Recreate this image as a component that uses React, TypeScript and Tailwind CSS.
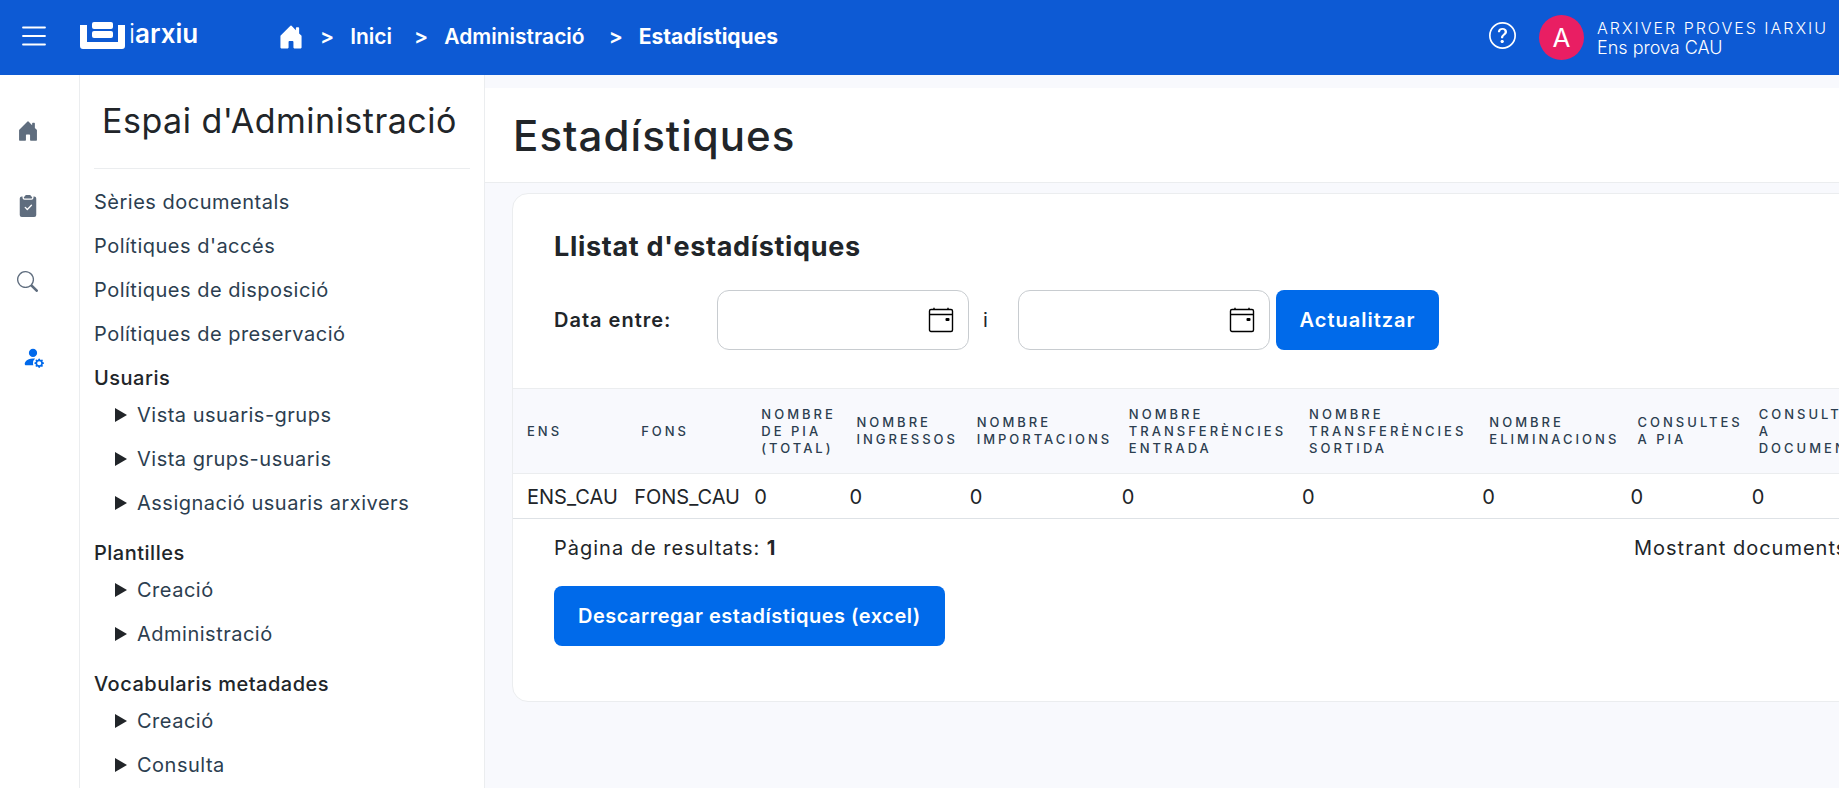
import React, { useState } from 'react';
import {
  BsHouseDoorFill,
  BsClipboard2CheckFill,
  BsSearch,
  BsPersonFillGear,
  BsQuestionCircle,
} from 'react-icons/bs';

interface MenuSection {
  title: string;
  items: string[];
}

interface StatColumn {
  label: string;
  value: string;
  width: string;
}

const LINKS = ['Sèries documentals', "Polítiques d'accés", 'Polítiques de disposició', 'Polítiques de preservació'];

const SECTIONS: MenuSection[] = [
  { title: 'Usuaris', items: ['Vista usuaris-grups', 'Vista grups-usuaris', 'Assignació usuaris arxivers'] },
  { title: 'Plantilles', items: ['Creació', 'Administració'] },
  { title: 'Vocabularis metadades', items: ['Creació', 'Consulta'] },
];

const COLUMNS: StatColumn[] = [
  { label: 'Ens', value: 'ENS_CAU', width: 'w-[114px]' },
  { label: 'Fons', value: 'FONS_CAU', width: 'w-[120px]' },
  { label: 'Nombre de PIA (total)', value: '0', width: 'w-[95px]' },
  { label: 'Nombre ingressos', value: '0', width: 'w-[120px]' },
  { label: 'Nombre importacions', value: '0', width: 'w-[152px]' },
  { label: 'Nombre transferències entrada', value: '0', width: 'w-[180px]' },
  { label: 'Nombre transferències sortida', value: '0', width: 'w-[180px]' },
  { label: 'Nombre eliminacions', value: '0', width: 'w-[148px]' },
  { label: 'Consultes a PIA', value: '0', width: 'w-[121px]' },
  { label: 'Consultes a documents', value: '0', width: 'w-[160px]' },
];

const Logo = () => (
  <a href="#" aria-label="iarxiu" className="flex items-start text-white">
    <svg width="46" height="28" viewBox="0 0 46 28" fill="currentColor">
      <path d="M0 3h7v17h31V3h7v21a3 3 0 0 1-3 3H3a3 3 0 0 1-3-3z" />
      <rect x="12" y="0" width="21" height="7" rx="2" />
      <rect x="12" y="9" width="21" height="7" rx="2" />
    </svg>
    <span className="ml-[3px] text-[26px] leading-6 font-light">i</span>
    <span className="text-[26px] leading-6 font-semibold">arxiu</span>
  </a>
);

const CalendarIcon = () => (
  <svg width="26" height="26" viewBox="0 0 26 26" fill="none" stroke="currentColor" strokeWidth="1.4">
    <rect x="1.5" y="2.5" width="23" height="22" rx="1.5" />
    <path d="M1.5 7.5h23M6 .8v2M20 .8v2" />
    <rect x="17.5" y="11" width="4" height="3" rx="1" fill="currentColor" stroke="none" />
  </svg>
);

const DateField: React.FC<{ id: string; label: string; value: string; onChange: (v: string) => void }> = ({ id, label, value, onChange }) => (
  <div className="flex h-15 w-[252px] items-center rounded-xl border border-[#c8ccd0] bg-white pr-[14px] pl-4">
    <input
      id={id}
      type="text"
      aria-label={label}
      value={value}
      onChange={(e) => onChange(e.target.value)}
      className="min-w-0 flex-1 bg-transparent text-lg outline-none"
    />
    <button type="button" aria-label="Obrir calendari" className="text-black">
      <CalendarIcon />
    </button>
  </div>
);

const Separator = () => <span className="px-4">&gt;</span>;

const Header = () => (
  <header className="flex h-[75px] items-center bg-[#0d5ad4] pr-[14px] pl-[22px] text-white">
    <button type="button" aria-label="Menú" className="mb-1">
      <svg width="24" height="20" viewBox="0 0 24 20" stroke="currentColor" strokeWidth="1.8" strokeLinecap="round">
        <path d="M1 1.5h22M1 10h22M1 18.5h22" />
      </svg>
    </button>
    <div className="mb-1 ml-[34px] w-[198px]">
      <Logo />
    </div>
    <nav className="mb-0.5 flex items-center text-[21px] font-semibold">
      <a href="#" aria-label="Pàgina principal">
        <BsHouseDoorFill className="h-[26px] w-[26px]" />
      </a>
      <Separator />
      <a href="#">Inici</a>
      <span className="w-1.5" />
      <Separator />
      <a href="#">Administració</a>
      <span className="w-2" />
      <Separator />
      <span className="font-bold">Estadístiques</span>
    </nav>
    <div className="ml-auto flex items-center">
      <a href="#" aria-label="Ajuda" className="mb-1">
        <BsQuestionCircle className="h-[27px] w-[27px]" />
      </a>
      <span className="ml-[23px] flex h-[45px] w-[45px] items-center justify-center rounded-full bg-[#e91e63] text-[26px]">A</span>
      <div className="ml-[13px] w-[228px] font-light whitespace-nowrap">
        <p className="text-base leading-5 tracking-[2px] uppercase">Arxiver proves iarxiu</p>
        <p className="text-lg leading-5">Ens prova CAU</p>
      </div>
    </div>
  </header>
);

const Rail = () => (
  <nav className="flex w-20 flex-none flex-col items-start border-r border-[#ebedef] pt-[45px] pl-[17px] text-[#5f6d7e]">
    <a href="#" aria-label="Inici"><BsHouseDoorFill className="h-[22px] w-[22px]" /></a>
    <a href="#" aria-label="Tasques" className="mt-[53px]"><BsClipboard2CheckFill className="h-[22px] w-[22px]" /></a>
    <a href="#" aria-label="Cerca" className="mt-[54px]"><BsSearch className="h-[21px] w-[21px]" /></a>
    <a href="#" aria-label="Administració" className="mt-[54px] ml-[5px] text-[#0069eb]"><BsPersonFillGear className="h-[22px] w-[22px]" /></a>
  </nav>
);

const Sidebar = () => (
  <aside className="w-[405px] flex-none border-r border-[#ebedef] px-[14px] text-xl leading-[30px] tracking-wide text-[#2c3e50]">
    <h2 className="border-b border-[#ebedef] px-2 pt-[22px] pb-[23px] text-[34px] leading-12 whitespace-nowrap text-[#212529]">Espai d'Administració</h2>
    <ul className="mt-[18px] space-y-[14px]">
      {LINKS.map((link) => (
        <li key={link}><a href="#">{link}</a></li>
      ))}
    </ul>
    {SECTIONS.map((section, i) => (
      <section key={section.title} className={i === 0 ? 'mt-[14px]' : 'mt-5'}>
        <h3 className="font-medium text-[#212529]">{section.title}</h3>
        <ul className="mt-[7px] space-y-[14px] pl-[21px]">
          {section.items.map((item) => (
            <li key={item} className="flex items-center gap-[10px]">
              <svg width="12" height="14" viewBox="0 0 12 14" className="fill-[#212529]"><path d="M0 0l12 7-12 7z" /></svg>
              <a href="#">{item}</a>
            </li>
          ))}
        </ul>
      </section>
    ))}
  </aside>
);

const StatsTable = () => (
  <table className="w-full table-fixed text-left">
    <thead className="border-y border-[#ebedef] bg-[#f8f9fd]">
      <tr className="h-[85px]">
        {COLUMNS.map((col) => (
          <th key={col.label} className={`${col.width} pl-[14px] text-[13px] leading-[17px] font-medium tracking-[3px] text-[#2c3e50] uppercase last:pr-8`}>
            {col.label}
          </th>
        ))}
      </tr>
    </thead>
    <tbody>
      <tr className="h-[45px] border-b border-[#dee2e6]">
        {COLUMNS.map((col) => (
          <td key={col.label} className="pt-0.5 pl-[7px] text-xl first:pl-[14px]">{col.value}</td>
        ))}
      </tr>
    </tbody>
  </table>
);

const App: React.FC = () => {
  const [from, setFrom] = useState('');
  const [to, setTo] = useState('');

  return (
    <div className="flex h-screen flex-col overflow-hidden bg-white font-['Inter','Liberation_Sans',sans-serif] text-[#212529]">
      <Header />
      <div className="flex min-h-0 flex-1">
        <Rail />
        <Sidebar />
        <main className="min-w-0 flex-1 overflow-hidden bg-[#f8f9fd] pt-[13px]">
          <div className="border-b border-[#ebedef] bg-white px-7 pt-6 pb-[22px]">
            <h1 className="text-[42px] leading-12 font-medium tracking-wide">Estadístiques</h1>
          </div>

          <div className="mt-2.5 ml-[27px] min-w-[1394px] rounded-2xl border border-[#ebedef] bg-white">
            <div className="px-[41px] pt-[35px]">
              <h2 className="text-[27px] leading-9 font-bold tracking-wide">Llistat d'estadístiques</h2>
              <form className="mt-[25px] flex items-center text-xl tracking-wider" onSubmit={(e) => e.preventDefault()}>
                <label htmlFor="date-from" className="w-[163px] font-semibold">Data entre:</label>
                <DateField id="date-from" label="Data inicial" value={from} onChange={setFrom} />
                <label htmlFor="date-to" className="w-[49px] pl-3.5">i</label>
                <DateField id="date-to" label="Data final" value={to} onChange={setTo} />
                <button type="submit" className="ml-1.5 h-15 w-[163px] rounded-lg bg-[#006aea] text-center font-semibold text-white">
                  Actualitzar
                </button>
              </form>
            </div>

            <div className="mt-[38px]">
              <StatsTable />
            </div>

            <div className="px-[41px] pt-[14px] pb-[55px] text-xl leading-[30px] tracking-wider">
              <div className="flex justify-between">
                <p>Pàgina de resultats: <b>1</b></p>
                <p className="w-[230px] whitespace-nowrap">Mostrant documents</p>
              </div>
              <button type="button" className="mt-[23px] h-15 rounded-lg bg-[#006aea] px-6 font-semibold tracking-wide text-white">
                Descarregar estadístiques (excel)
              </button>
            </div>
          </div>
        </main>
      </div>
    </div>
  );
};

export default App;
